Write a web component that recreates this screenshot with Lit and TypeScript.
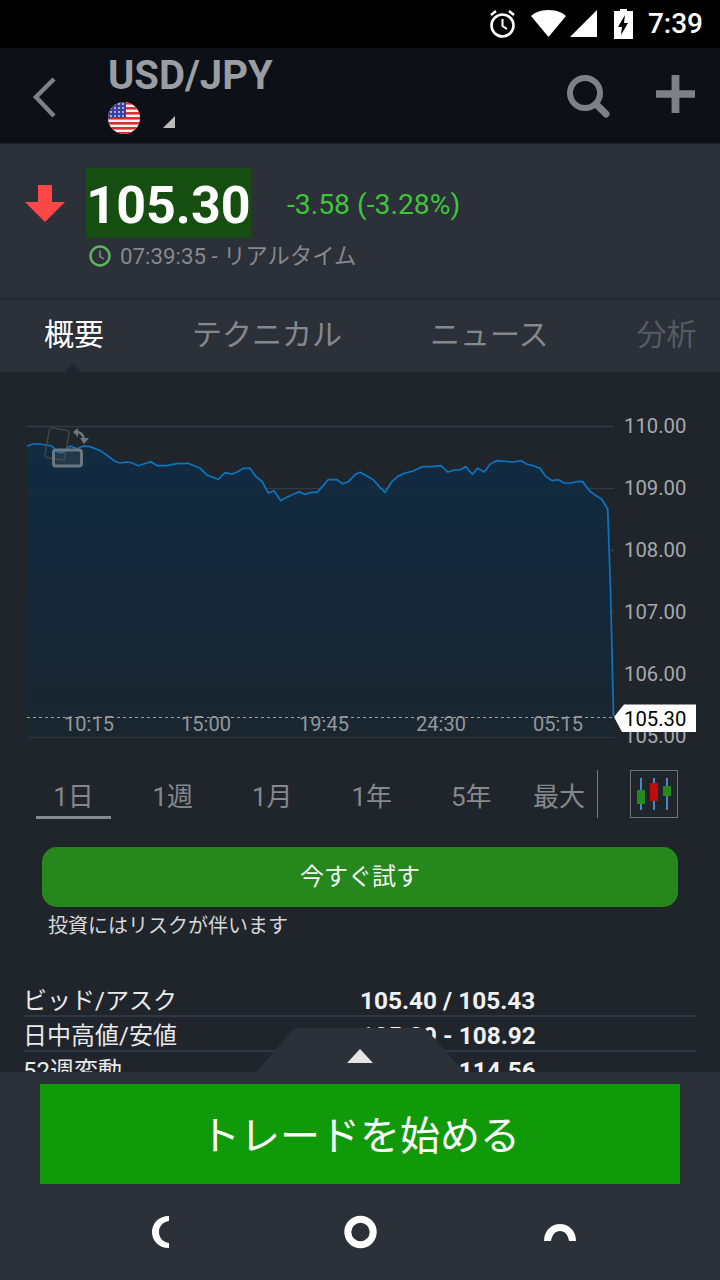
import { LitElement, html, css, svg } from "lit";
import { customElement } from "lit/decorators.js";

// line traced from the reference, [x, y] in page pixels minus chart origin
const LEFT = [[82,108],[100,102],[120,102],[155,108],[175,127],[190,127],[210,108],[232,116],[250,108],[270,110],[303,123],[345,154],[360,159],[380,156],[395,158],[415,167],[453,155],[472,167],[500,167],[530,161],[565,160],[600,175],[622,196],[655,208],[675,188],[695,192],[710,187],[730,175],[750,175],[768,200],[786,214],[805,249],[822,242],[842,272],[860,262],[897,245],[915,253],[935,247],[952,247],[985,209],[1010,209],[1028,221],[1045,215],[1065,194],[1080,187]];
const RIGHT = [[38,208],[60,232],[75,247],[95,215],[115,198],[135,189],[160,183],[187,170],[215,170],[243,167],[263,186],[283,180],[300,180],[317,170],[337,193],[353,175],[373,186],[390,163],[410,152],[460,156],[483,152],[500,162],[520,167],[540,175],[558,200],[577,212],[595,209],[613,219],[633,219],[650,215],[668,215],[688,242],[705,255],[725,267],[743,298]];

const CHART_TOP = 372;
const points = [
  ...LEFT.map(([x, y]) => [x / 3, 410 + y / 3 - CHART_TOP]),
  ...RIGHT.map(([x, y]) => [360 + x / 3, 410 + y / 3 - CHART_TOP]),
  [610.5, 590 - CHART_TOP],
  [613.5, 716 - CHART_TOP],
];
const linePath = points.map((p) => p[0].toFixed(1) + "," + p[1].toFixed(1)).join(" ");
const areaPath = linePath + ` 613.5,${737 - CHART_TOP} 27,${737 - CHART_TOP}`;

const GRID = [
  { label: "110.00", y: 54.5 },
  { label: "109.00", y: 116.5 },
  { label: "108.00", y: 178.5 },
  { label: "107.00", y: 240.5 },
  { label: "106.00", y: 302.5 },
  { label: "105.00", y: 365 },
];
const TIMES = [
  { label: "10:15", x: 89 },
  { label: "15:00", x: 206 },
  { label: "19:45", x: 324 },
  { label: "24:30", x: 441 },
  { label: "05:15", x: 558 },
];
const PERIODS = ["1日", "1週", "1月", "1年", "5年", "最大"];
const ROWS = [
  { label: "ビッド/アスク", value: "105.40 / 105.43" },
  { label: "日中高値/安値", value: "105.29 - 108.92" },
  { label: "52週変動", value: "100.75 - 114.56" },
];

@customElement("app-root")
export class AppRoot extends LitElement {
  static styles = css`
    :host {
      display: flex;
      flex-direction: column;
      width: 720px;
      height: 1280px;
      overflow: hidden;
      background: #20252b;
      font-family: Roboto, "Noto Sans CJK JP", sans-serif;
    }
    svg {
      display: block;
    }

    .status {
      height: 48px;
      flex: none;
      background: #000;
      display: flex;
      align-items: center;
      justify-content: flex-end;
      padding-right: 17px;
      box-sizing: border-box;
    }
    .status .icons {
      margin-right: 15px;
    }
    .clock {
      color: #fff;
      font-size: 28px;
      font-weight: 500;
      line-height: 48px;
    }

    .header {
      height: 96px;
      flex: none;
      box-sizing: border-box;
      background: #0d1117;
      display: flex;
      align-items: flex-start;
      border-bottom: 1px solid #1a1f26;
    }
    .back {
      margin: 28px 0 0 30px;
    }
    .title-block {
      margin-left: 50px;
      flex: 1;
    }
    .title {
      color: #9a9da1;
      font-size: 40px;
      font-weight: 700;
      line-height: 44px;
      margin-top: 6px;
    }
    .flag-row {
      display: flex;
      align-items: flex-end;
      gap: 23px;
      margin-top: 4px;
    }
    .flag-row .mark {
      margin-bottom: 6px;
    }
    .search {
      margin: 26px 0 0 0;
    }
    .plus {
      margin: 27px 25px 0 45px;
    }

    .quote {
      height: 156px;
      flex: none;
      box-sizing: border-box;
      background: #2b3039;
      padding: 24px 0 0 25px;
      border-bottom: 2px solid #252a32;
    }
    .price-row {
      display: flex;
      align-items: center;
    }
    .price {
      margin-left: 21px;
      width: 165px;
      height: 70px;
      background: #154e10;
      color: #fff;
      font-size: 52px;
      font-weight: 700;
      line-height: 76px;
      text-align: center;
    }
    .change {
      margin-left: 36px;
      padding-top: 2px;
      color: #3fc53a;
      font-size: 28.3px;
      white-space: nowrap;
    }
    .time-row {
      display: flex;
      align-items: center;
      gap: 9px;
      margin: 4px 0 0 64px;
      color: #85888d;
      font-size: 22.3px;
      line-height: 28px;
    }

    .tabs {
      height: 72px;
      flex: none;
      box-sizing: border-box;
      background: #2b3039;
      display: flex;
      gap: 88px;
      padding-left: 44px;
      font-size: 30px;
      line-height: 70px;
      color: #85888d;
      white-space: nowrap;
      position: relative;
    }
    .tabs .active {
      color: #fff;
    }
    .tabs .dim {
      color: #565b62;
    }
    .notch {
      position: absolute;
      left: 65px;
      bottom: 0;
      width: 0;
      height: 0;
      border-left: 8px solid transparent;
      border-right: 8px solid transparent;
      border-bottom: 9px solid #20252b;
    }

    .content {
      height: 700px;
      flex: none;
      overflow: hidden;
      position: relative;
      background: #20252b;
    }
    .periods {
      display: flex;
      align-items: flex-start;
      height: 50px;
      margin-top: 12px;
      padding-left: 24px;
      color: #85888d;
      font-size: 26px;
    }
    .period {
      width: 99.5px;
      height: 49px;
      box-sizing: border-box;
      text-align: center;
      line-height: 54px;
    }
    .period.active {
      width: 75px;
      margin: 0 12px;
      border-bottom: 3px solid #85888d;
    }
    .period.last {
      width: 76px;
      flex: none;
    }
    .divider {
      width: 1px;
      height: 48px;
      background: #777b80;
    }
    .chart-type {
      margin-left: 32px;
    }

    .try {
      margin: 27px 42px 0;
      height: 60px;
      border-radius: 15px;
      background: #26871c;
      color: #f2f5f1;
      font-size: 24px;
      line-height: 60px;
      text-align: center;
    }
    .risk {
      margin: 5px 0 0 48px;
      color: #d5d7d9;
      font-size: 20px;
      line-height: 28px;
    }

    .table {
      margin: 42px 24px 0;
    }
    .row {
      height: 35px;
      box-sizing: border-box;
      border-bottom: 2px solid #32373f;
      display: flex;
      align-items: center;
      color: #e9eaeb;
      font-size: 24px;
      white-space: nowrap;
    }
    .row .label {
      width: 336px;
      margin-left: -1px;
      margin-right: 1px;
      box-sizing: border-box;
    }
    .row .value {
      color: #f0f1f2;
      font-size: 24.4px;
      font-weight: 700;
      padding-top: 3px;
    }

    .handle {
      position: absolute;
      left: 256px;
      bottom: 0;
    }

    .sheet {
      height: 112px;
      flex: none;
      box-sizing: border-box;
      background: #2b3039;
      padding: 12px 40px 0;
    }
    .trade {
      height: 100px;
      background: #109a09;
      color: #fff;
      font-size: 40px;
      line-height: 106px;
      text-align: center;
    }

    .nav {
      height: 96px;
      flex: none;
      background: #2b3039;
      display: flex;
      justify-content: flex-start;
      align-items: flex-start;
    }
  `;

  private flag() {
    return html`<svg width="32" height="32" viewBox="0 0 32 32">
      <defs>
        <clipPath id="flagClip"><ellipse cx="16" cy="16" rx="16" ry="16"></ellipse></clipPath>
      </defs>
      <g clip-path="url(#flagClip)">
        <rect width="32" height="32" fill="#f2f2f4"></rect>
        ${[0, 5, 10, 15, 20, 25, 30].map(
          (y) => svg`<rect y=${y} width="32" height="2.6" fill="#d9302e"></rect>`
        )}
        <rect width="18" height="16" fill="#3c3f9c"></rect>
        ${[2, 6, 10, 14].map((y) =>
          [3, 7, 11, 15].map(
            (x) => svg`<circle cx=${x} cy=${y} r="0.9" fill="#dfe0f0"></circle>`
          )
        )}
      </g>
    </svg>`;
  }

  private chart() {
    return html`<svg width="720" height="386" viewBox="0 0 720 386">
      <defs>
        <linearGradient id="area" x1="0" y1="0" x2="0" y2="1">
          <stop offset="0" stop-color="#102c44"></stop>
          <stop offset="0.35" stop-color="#12283d"></stop>
          <stop offset="1" stop-color="#1a2630"></stop>
        </linearGradient>
      </defs>
      ${GRID.map(
        (g) => svg`
          <line x1="27" x2="614" y1=${g.y} y2=${g.y} stroke="#39404a" stroke-opacity="0.8" stroke-width="1.5"></line>
          <text x="624" y=${g.y + 6} fill="#a6a9ac" font-size="20.3">${g.label}</text>
        `
      )}
      <polygon points=${areaPath} fill="url(#area)" fill-opacity="0.9"></polygon>
      <line x1="27" x2="614" y1="345.5" y2="345.5" stroke="#9a9da1" stroke-dasharray="3 3" stroke-width="1"></line>
      ${TIMES.map(
        (t) => svg`<text x=${t.x} y="359" text-anchor="middle" fill="#94979b" font-size="20">${t.label}</text>`
      )}
      <polyline points=${linePath} fill="none" stroke="#0a76c2" stroke-width="1.7"></polyline>

      <!-- rotate hint -->
      <g fill="none">
        <rect x="47" y="57" width="20" height="30" rx="3" transform="rotate(10 57 72)" stroke="#43474c" stroke-width="1.3"></rect>
        <rect x="53.5" y="78" width="28" height="16" rx="2.5" fill="#5c646d" fill-opacity="0.25" stroke="#6c7781" stroke-width="3"></rect>
        <path d="M76 60 C80 60 83 62 84 67" stroke="#73777b" stroke-width="2.5"></path>
        <path d="M73 60 L78 56 L78 65 Z M80 66 L89 66 L84 72 Z" fill="#73777b"></path>
      </g>

      <polygon points="614,345 624,332.5 696,332.5 696,360 622,360" fill="#fff"></polygon>
      <text x="624" y="354" fill="#000" font-size="20.3">105.30</text>
    </svg>`;
  }

  render() {
    return html`
      <div class="status">
        <svg class="icons" width="146" height="32" viewBox="0 0 146 32" fill="#fff">
          <circle cx="15.5" cy="17.5" r="11" fill="none" stroke="#fff" stroke-width="2.6"></circle>
          <path d="M15.5 11 V18 L20 21" fill="none" stroke="#fff" stroke-width="2"></path>
          <path d="M4 7 L9 3 M27 7 L22 3" stroke="#fff" stroke-width="2.6"></path>
          <path d="M61.5 2 C53 2 47 5 44 8 L61.5 29 L79 8 C76 5 70 2 61.5 2 Z"></path>
          <polygon points="110,2 110,29 83,29"></polygon>
          <path d="M133 1 H140 V3 H146 V31 H127 V3 H133 Z M138 7 L131 19 H135 L134 27 L141 15 H137 Z" fill-rule="evenodd"></path>
        </svg>
        <span class="clock">7:39</span>
      </div>

      <div class="header">
        <svg class="back" width="28" height="44" viewBox="0 0 28 44">
          <path d="M24 3 L6 21 L24 40" fill="none" stroke="#7d8187" stroke-width="4.5"></path>
        </svg>
        <div class="title-block">
          <div class="title">USD/JPY</div>
          <div class="flag-row">
            ${this.flag()}
            <svg class="mark" width="12" height="12" viewBox="0 0 12 12">
              <polygon points="12,0 12,12 0,12" fill="#bdbdbd"></polygon>
            </svg>
          </div>
        </div>
        <svg class="search" width="45" height="44" viewBox="0 0 45 44">
          <circle cx="19" cy="19" r="15" fill="none" stroke="#7d8187" stroke-width="6"></circle>
          <line x1="30" y1="30" x2="40" y2="40" stroke="#7d8187" stroke-width="7" stroke-linecap="round"></line>
        </svg>
        <svg class="plus" width="39" height="38" viewBox="0 0 40 40" preserveAspectRatio="none">
          <path d="M16 0 H24 V16 H40 V24 H24 V40 H16 V24 H0 V16 H16 Z" fill="#7d8187"></path>
        </svg>
      </div>

      <div class="quote">
        <div class="price-row">
          <svg width="40" height="37" viewBox="0 0 40 37">
            <polygon points="13,0 27,0 27,17 40,17 20,37 0,17 13,17" fill="#ff4747"></polygon>
          </svg>
          <div class="price">105.30</div>
          <div class="change">-3.58 (-3.28%)</div>
        </div>
        <div class="time-row">
          <svg width="22" height="22" viewBox="0 0 22 22">
            <circle cx="11" cy="11" r="9.5" fill="none" stroke="#5cb85c" stroke-width="2.4"></circle>
            <path d="M11 5.5 V11.5 L15 14" fill="none" stroke="#8a9a8a" stroke-width="1.4"></path>
          </svg>
          <span>07:39:35 - リアルタイム</span>
        </div>
      </div>

      <div class="tabs">
        <span class="active">概要</span>
        <span>テクニカル</span>
        <span>ニュース</span>
        <span class="dim">分析</span>
        <div class="notch"></div>
      </div>

      <div class="content">
        ${this.chart()}
        <div class="periods">
          ${PERIODS.map(
            (p, i) => html`<div class="period ${i === 0 ? "active" : ""} ${i === 5 ? "last" : ""}">${p}</div>`
          )}
          <div class="divider"></div>
          <svg class="chart-type" width="48" height="48" viewBox="0 0 48 48">
            <rect x="0.5" y="0.5" width="47" height="47" fill="none" stroke="#6f7378"></rect>
            <path d="M11 8 V40 M24 8 V40 M37 8 V40" stroke="#4a86c0" stroke-width="2"></path>
            <rect x="7" y="20" width="8" height="14" fill="#22891a"></rect>
            <rect x="20" y="13" width="8" height="18" fill="#c00b0b"></rect>
            <rect x="33" y="16" width="8" height="10" fill="#22891a"></rect>
          </svg>
        </div>
        <div class="try">今すぐ試す</div>
        <div class="risk">投資にはリスクが伴います</div>
        <div class="table">
          ${ROWS.map(
            (r) => html`<div class="row"><span class="label">${r.label}</span><span class="value">${r.value}</span></div>`
          )}
        </div>
        <svg class="handle" width="208" height="44" viewBox="0 0 208 44">
          <path d="M0 44 L36 3 Q39 0 43 0 H165 Q169 0 172 3 L208 44 Z" fill="#2b3039"></path>
          <polygon points="91,35 104,21 117,35" fill="#e6e6e6"></polygon>
        </svg>
      </div>

      <div class="sheet"><div class="trade">トレードを始める</div></div>

      <div class="nav">
        <svg width="720" height="96" viewBox="0 0 720 96" fill="#fff">
          <path d="M169 32 C158 32 152 40 152 48 C152 56 158 64 169 64 L169 59 C163 58 159 54 159 48 C159 42 163 38 169 37 Z"></path>
          <circle cx="360.5" cy="48" r="12.7" fill="none" stroke="#fff" stroke-width="7"></circle>
          <path d="M544 57 C544 46 552 40 560 40 C568 40 576 46 576 57 H569 C568 51 565 47 560 47 C555 47 552 51 551 57 Z"></path>
        </svg>
      </div>
    `;
  }
}
